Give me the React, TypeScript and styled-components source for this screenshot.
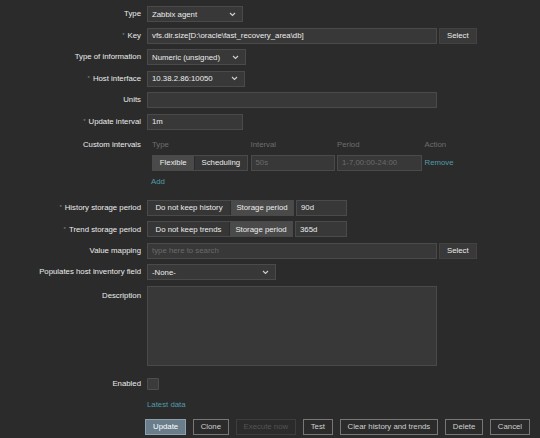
import styled, { createGlobalStyle } from 'styled-components';

const GlobalStyle = createGlobalStyle`
  html, body {
    margin: 0;
    padding: 0;
    background: #2b2b2b;
    overflow: hidden;
  }
  body {
    font-family: "Liberation Sans", Arial, sans-serif;
    font-size: 7.8px;
    color: #ececec;
  }
`;

const Page = styled.div`
  width: 540px;
  height: 438px;
  overflow: hidden;
  box-sizing: border-box;
  padding-top: 6px;
  display: flex;
  flex-direction: column;
  gap: 5.6px;
`;

const Row = styled.div<{ $top?: boolean; $mt?: number }>`
  display: grid;
  grid-template-columns: 141px 1fr;
  column-gap: 6px;
  align-items: ${(p) => (p.$top ? 'start' : 'center')};
  min-height: 16px;
  margin-top: ${(p) => p.$mt ?? 0}px;
`;

const Label = styled.div<{ $pt?: number }>`
  text-align: right;
  white-space: nowrap;
  color: #ececec;
  padding-top: ${(p) => p.$pt ?? 0}px;
  line-height: 10px;
`;

const Req = styled.span`
  color: #8a8a8a;
  font-size: 6px;
  margin-right: 3px;
  vertical-align: 1px;
`;

const Field = styled.div`
  display: flex;
  align-items: center;
  gap: 2px;
`;

const Input = styled.div<{ $w: number; $ph?: boolean }>`
  box-sizing: border-box;
  width: ${(p) => p.$w}px;
  height: 16px;
  background: #383838;
  border: 1px solid #4a4a4a;
  padding: 0 4px;
  display: flex;
  align-items: center;
  white-space: nowrap;
  overflow: hidden;
  color: ${(p) => (p.$ph ? '#6b6b6b' : '#ececec')};
`;

const SelectBox = styled(Input)`
  justify-content: space-between;
  padding-right: 6px;
`;

const Button = styled.div`
  box-sizing: border-box;
  height: 16px;
  padding: 0 7px;
  display: flex;
  align-items: center;
  background: #393939;
  border: 1px solid #424242;
  color: #ececec;
`;

const Segmented = styled.div`
  display: flex;
  border: 1px solid #4a4a4a;
  box-sizing: border-box;
  height: 16px;
`;

const Seg = styled.div<{ $w: number; $on?: boolean }>`
  box-sizing: border-box;
  width: ${(p) => p.$w}px;
  display: flex;
  align-items: center;
  justify-content: center;
  background: ${(p) => (p.$on ? '#4a4a4a' : '#363636')};
  color: #ececec;
  white-space: nowrap;
  & + & {
    border-left: 1px solid #2b2b2b;
  }
`;

const Intervals = styled.div`
  display: grid;
  grid-template-columns: 96px 84px 85px auto;
  column-gap: 2.5px;
  row-gap: 5px;
  padding-left: 5px;
  padding-top: 4px;
  align-items: center;
`;

const Head = styled.div`
  color: #6e6e6e;
  line-height: 10px;
`;

const Link = styled.a`
  color: #4f9ca8;
  text-decoration: none;
  line-height: 12px;
  cursor: pointer;
`;

const AddLink = styled(Link)`
  grid-column: 1 / -1;
  margin-left: -1px;
`;

const TextArea = styled.div`
  box-sizing: border-box;
  width: 290px;
  height: 80px;
  background: #383838;
  border: 1px solid #4a4a4a;
`;

const Check = styled.div`
  box-sizing: border-box;
  width: 12px;
  height: 12px;
  background: #3b3b3b;
  border: 1px solid #4d4d4d;
  border-radius: 1px;
`;

const Actions = styled.div`
  display: flex;
  gap: 6.5px;
  margin-left: -2px;
`;

const Action = styled.div<{ $kind?: 'main' | 'off' }>`
  box-sizing: border-box;
  height: 16px;
  padding: 0 7px;
  display: flex;
  align-items: center;
  white-space: nowrap;
  border: 1px solid
    ${(p) => (p.$kind === 'main' ? '#8da0ae' : p.$kind === 'off' ? '#3d3d3d' : '#777')};
  background: ${(p) => (p.$kind === 'main' ? '#6a7d8b' : 'transparent')};
  color: ${(p) => (p.$kind === 'main' ? '#fff' : p.$kind === 'off' ? '#555' : '#cfcfcf')};
`;

const Chevron = () => (
  <svg width="7" height="5" viewBox="0 0 7 5">
    <path d="M1 1 L3.5 3.5 L6 1" fill="none" stroke="#d0d0d0" strokeWidth="1.1" />
  </svg>
);

function Select({ w, value }: { w: number; value: string }) {
  return (
    <SelectBox $w={w}>
      <span>{value}</span>
      <Chevron />
    </SelectBox>
  );
}

export default function App() {
  return (
    <>
      <GlobalStyle />
      <Page>
        <Row $mt={-21.6}>
          <Label />
          <Field>
            <Input $w={290} />
          </Field>
        </Row>
        <Row>
          <Label>Type</Label>
          <Field>
            <Select w={96} value="Zabbix agent" />
          </Field>
        </Row>
        <Row>
          <Label>
            <Req>*</Req>Key
          </Label>
          <Field>
            <Input $w={290}>vfs.dir.size[D:\oracle\fast_recovery_area\db]</Input>
            <Button>Select</Button>
          </Field>
        </Row>
        <Row>
          <Label>Type of information</Label>
          <Field>
            <Select w={99} value="Numeric (unsigned)" />
          </Field>
        </Row>
        <Row>
          <Label>
            <Req>*</Req>Host interface
          </Label>
          <Field>
            <Select w={98} value="10.38.2.86:10050" />
          </Field>
        </Row>
        <Row>
          <Label>Units</Label>
          <Field>
            <Input $w={290} />
          </Field>
        </Row>
        <Row>
          <Label>
            <Req>*</Req>Update interval
          </Label>
          <Field>
            <Input $w={96}>1m</Input>
          </Field>
        </Row>
        <Row $top>
          <Label $pt={4}>Custom intervals</Label>
          <Intervals>
            <Head>Type</Head>
            <Head>Interval</Head>
            <Head>Period</Head>
            <Head>Action</Head>
            <Segmented>
              <Seg $w={41} $on>
                Flexible
              </Seg>
              <Seg $w={54}>Scheduling</Seg>
            </Segmented>
            <Input $w={84} $ph>
              50s
            </Input>
            <Input $w={85} $ph>
              1-7,00:00-24:00
            </Input>
            <Link>Remove</Link>
            <AddLink>Add</AddLink>
          </Intervals>
        </Row>
        <Row $mt={6.4}>
          <Label>
            <Req>*</Req>History storage period
          </Label>
          <Field>
            <Segmented>
              <Seg $w={82}>Do not keep history</Seg>
              <Seg $w={63} $on>
                Storage period
              </Seg>
            </Segmented>
            <Input $w={51}>90d</Input>
          </Field>
        </Row>
        <Row>
          <Label>
            <Req>*</Req>Trend storage period
          </Label>
          <Field>
            <Segmented>
              <Seg $w={81}>Do not keep trends</Seg>
              <Seg $w={63} $on>
                Storage period
              </Seg>
            </Segmented>
            <Input $w={52}>365d</Input>
          </Field>
        </Row>
        <Row>
          <Label>Value mapping</Label>
          <Field>
            <Input $w={290} $ph>
              type here to search
            </Input>
            <Button>Select</Button>
          </Field>
        </Row>
        <Row>
          <Label>Populates host inventory field</Label>
          <Field>
            <Select w={129} value="-None-" />
          </Field>
        </Row>
        <Row $top>
          <Label $pt={5}>Description</Label>
          <TextArea />
        </Row>
        <Row $mt={4}>
          <Label>Enabled</Label>
          <Field>
            <Check />
          </Field>
        </Row>
        <Row>
          <Label />
          <Field>
            <Link>Latest data</Link>
          </Field>
        </Row>
        <Row>
          <Label />
          <Actions>
            <Action $kind="main">Update</Action>
            <Action>Clone</Action>
            <Action $kind="off">Execute now</Action>
            <Action>Test</Action>
            <Action>Clear history and trends</Action>
            <Action>Delete</Action>
            <Action>Cancel</Action>
          </Actions>
        </Row>
      </Page>
    </>
  );
}
